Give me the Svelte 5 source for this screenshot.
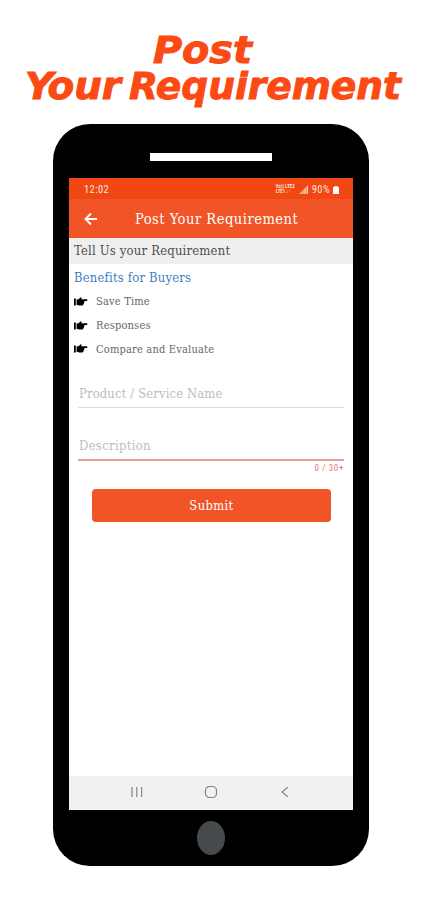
<script lang="ts">
  const benefits = ['Save Time', 'Responses', 'Compare and Evaluate'];

  let product = '';
  let description = '';
</script>

<main class="page">
  <svg class="headline" width="422" height="124" viewBox="0 0 422 124" role="heading" aria-level="1">
    <text x="153" y="62.5" textLength="99" lengthAdjust="spacingAndGlyphs">Post</text>
    <text x="25" y="99" textLength="96" lengthAdjust="spacingAndGlyphs">Your</text>
    <text x="129" y="99" textLength="272" lengthAdjust="spacingAndGlyphs">Requirement</text>
  </svg>

  <div class="phone">
    <div class="speaker"></div>

    <div class="screen">
      <div class="status-bar">
        <span class="time">12:02</span>
        <div class="network">
          <span>Vo)) LTE2</span>
          <span>LTE1 ↓↑</span>
        </div>
        <svg class="signal" width="9" height="9" viewBox="0 0 9 9">
          <path d="M0 9 9 0V9Z" fill="#fff" opacity=".4" />
          <path d="M1 9V8M3.5 9V6M6 9V3.5M8.5 9V1" stroke="#ffe5dc" opacity=".7" />
        </svg>
        <span class="percent">90%</span>
        <svg class="battery" width="6" height="8" viewBox="0 0 6 8">
          <path d="M0 1H1.5V0H4.5V1H6V8H0Z" fill="#fff" />
        </svg>
      </div>

      <header class="app-bar">
        <svg width="14" height="14" viewBox="0 0 14 14">
          <path d="M13 7H2M7 1.5 1.5 7 7 12.5" fill="none" stroke="#fff" stroke-width="1.9" />
        </svg>
        <h2>Post Your Requirement</h2>
      </header>

      <div class="section-title">Tell Us your Requirement</div>

      <section class="benefits">
        <h3>Benefits for Buyers</h3>
        <ul>
          {#each benefits as benefit}
            <li>
              <svg width="14" height="10" viewBox="0 0 14 10">
                <path d="M0 1.6H1.8V8.6H0Z" />
                <path d="M2.6 2.6 4.4 2.2 6.4 .4Q7.8 0 7.5 1.4L7.1 2.2H12.6Q13.8 2.4 13.4 3.4 13 4.2 12 4.1H10.2Q11 5 10 5.8 10.3 6.7 9.4 7.2 9.5 8.2 8.4 8.6H5.2L3.9 8H2.6Z" />
              </svg>
              <span>{benefit}</span>
            </li>
          {/each}
        </ul>
      </section>

      <form class="form">
        <input class="product" placeholder="Product / Service Name" bind:value={product} />
        <input class="description" placeholder="Description" bind:value={description} />
        <div class="counter">{description.length} / 30+</div>
        <button type="button">Submit</button>
      </form>

      <nav class="nav-bar">
        <svg width="12" height="12" viewBox="0 0 12 12">
          <path d="M1 1V11M5.8 1V11M10.6 1V11" />
        </svg>
        <svg width="14" height="14" viewBox="0 0 14 14">
          <rect x="1.5" y="1.5" width="11" height="11" rx="4" />
        </svg>
        <svg width="12" height="12" viewBox="0 0 12 12">
          <path d="M8.8 1.2 3 6 8.8 10.8" />
        </svg>
      </nav>
    </div>

    <div class="home-button"></div>
  </div>
</main>

<style>
  :global(body) {
    background: #fff;
  }

  .page {
    width: 422px;
    height: 900px;
    overflow: hidden;
    background: #fff;
    font-family: 'DejaVu Serif Condensed', 'DejaVu Serif', serif;
    font-stretch: condensed;
  }

  .headline {
    display: block;
    font-family: 'DejaVu Sans Condensed', 'DejaVu Sans', sans-serif;
    font-size: 38px;
    font-weight: bold;
    font-style: italic;
    fill: #fb4a14;
    stroke: #fb4a14;
    stroke-width: 0.9px;
  }

  .phone {
    box-sizing: border-box;
    width: 316px;
    height: 742px;
    margin-left: 53px;
    padding: 29px 16px 0;
    display: flex;
    flex-direction: column;
    align-items: center;
    background: #000;
    border-radius: 37px;
  }

  .speaker {
    width: 122px;
    height: 8px;
    flex: none;
    background: #fff;
  }

  .screen {
    width: 284px;
    height: 632px;
    margin-top: 17px;
    flex: none;
    display: flex;
    flex-direction: column;
    background: #fff;
  }

  .status-bar {
    box-sizing: border-box;
    height: 21px;
    padding: 2px 14px 0 15px;
    display: flex;
    align-items: center;
    background: #f04713;
    color: #ffe5dc;
    font-family: Roboto, sans-serif;
    font-size: 10.5px;
    letter-spacing: 0.4px;
  }

  .network {
    width: 22px;
    margin-left: auto;
    display: flex;
    flex-direction: column;
    font-size: 4.7px;
    line-height: 4.5px;
    font-weight: bold;
    white-space: nowrap;
    letter-spacing: 0.1px;
  }

  .signal {
    margin: 0 4px 0 1px;
  }

  .battery {
    margin-left: 3px;
  }

  .app-bar {
    height: 39px;
    flex: none;
    display: flex;
    align-items: center;
    padding-left: 15px;
    background: #f15426;
    color: #fff;
  }

  h2,
  h3,
  ul {
    margin: 0;
    padding: 0;
    font-weight: normal;
  }

  h2 {
    margin-left: 37px;
    font-size: 14.6px;
    letter-spacing: 0.48px;
    white-space: nowrap;
  }

  .section-title {
    height: 26px;
    flex: none;
    padding-left: 5px;
    background: #efefef;
    color: #505050;
    font-size: 13px;
    letter-spacing: 0.17px;
    line-height: 26px;
  }

  .benefits {
    padding: 4px 5px 0;
  }

  h3 {
    height: 22px;
    color: #3e7fc0;
    font-size: 12.9px;
    letter-spacing: 0.2px;
    line-height: 20px;
  }

  li {
    height: 23.7px;
    display: flex;
    align-items: center;
    gap: 8px;
    color: #666;
    font-size: 11px;
    letter-spacing: 0.18px;
  }

  .form {
    display: flex;
    flex-direction: column;
    padding: 21px 9px 0;
  }

  input {
    box-sizing: border-box;
    width: 100%;
    height: 26px;
    padding: 0 0 3px 1px;
    border: 0;
    border-bottom: 1px solid #dcdcdc;
    border-radius: 0;
    outline: 0;
    background: transparent;
    font: inherit;
    font-size: 12.9px;
    letter-spacing: 0.15px;
    color: #505050;
  }

  input::placeholder {
    color: #bdbdbd;
    opacity: 1;
  }

  .description {
    height: 27px;
    margin-top: 26px;
    border-bottom: 2px solid #ef9896;
    letter-spacing: 0.35px;
  }

  .counter {
    height: 14px;
    color: #e57373;
    font-family: Roboto, sans-serif;
    font-size: 9px;
    line-height: 14px;
    letter-spacing: 0.6px;
    text-align: right;
  }

  button {
    height: 33px;
    margin: 14px 13px 0 14px;
    padding: 0;
    border: 0;
    border-radius: 4px;
    background: #f15426;
    color: #fff;
    font: inherit;
    font-size: 12.8px;
    letter-spacing: 0.4px;
  }

  .nav-bar {
    height: 34px;
    margin-top: auto;
    flex: none;
    display: flex;
    align-items: center;
    justify-content: center;
    gap: 61px;
    background: #f1f1f1;
  }

  .nav-bar svg {
    margin-bottom: 2px;
    fill: none;
    stroke: #858585;
    stroke-width: 1.2px;
  }

  .home-button {
    width: 28px;
    height: 34px;
    margin-top: 11px;
    flex: none;
    border-radius: 50%;
    background: #454b4d;
  }
</style>
